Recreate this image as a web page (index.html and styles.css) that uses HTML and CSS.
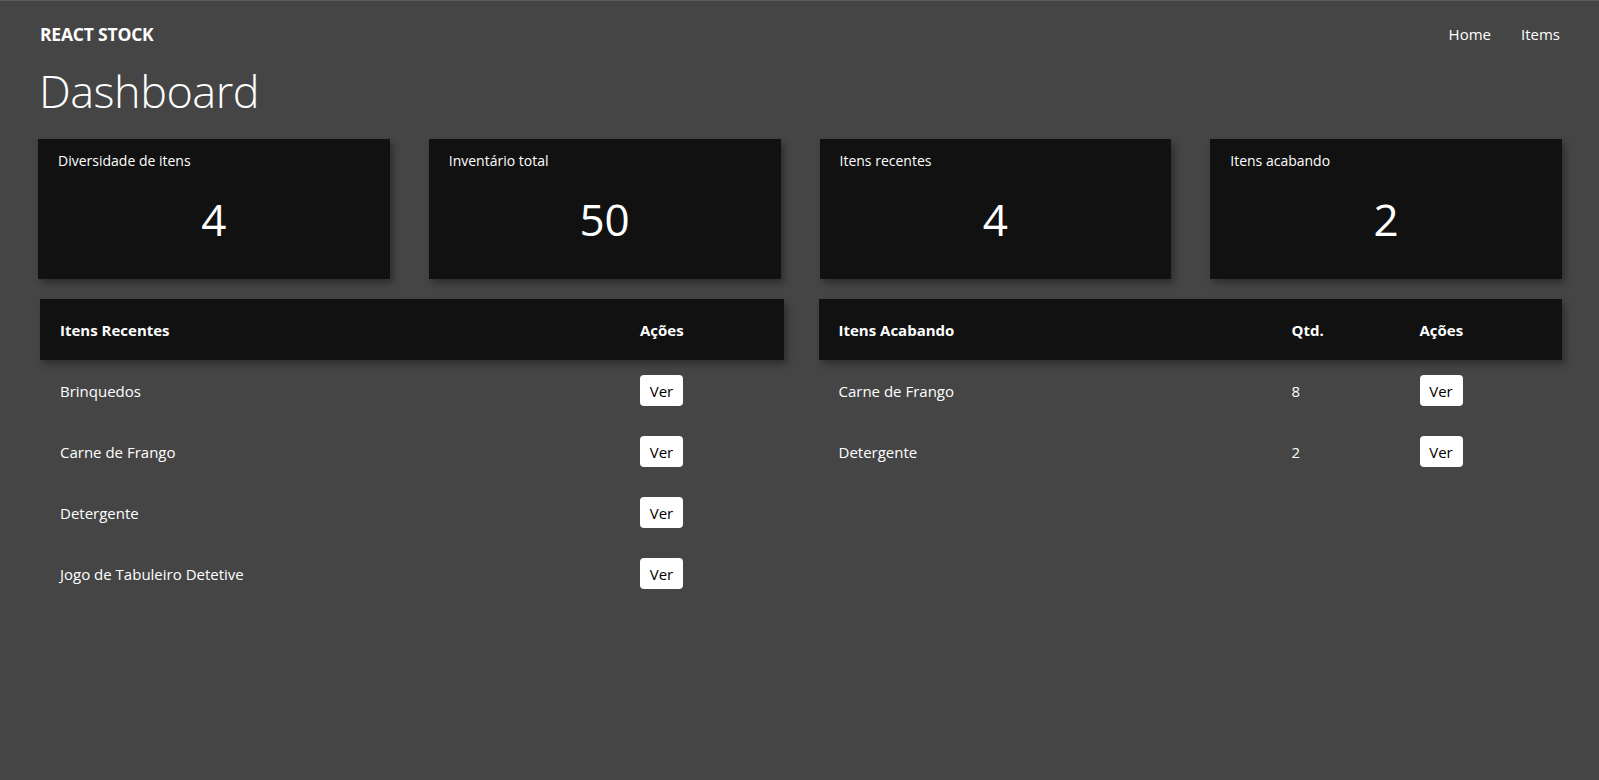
FILE: index.html
```html
<!DOCTYPE html>
<html lang="pt-BR">
<head>
<meta charset="utf-8">
<title>React Stock</title>
<link rel="stylesheet" href="styles.css">
</head>
<body>
<div class="app">
  <header class="navbar">
    <span class="brand">REACT STOCK</span>
    <nav class="nav">
      <a href="#" class="nav-link">Home</a>
      <a href="#" class="nav-link">Items</a>
    </nav>
  </header>
  <h1 class="page-title">Dashboard</h1>

  <section class="stats">
    <div class="stat-card">
      <div class="stat-label">Diversidade de itens</div>
      <div class="stat-value">4</div>
    </div>
    <div class="stat-card">
      <div class="stat-label">Inventário total</div>
      <div class="stat-value">50</div>
    </div>
    <div class="stat-card">
      <div class="stat-label">Itens recentes</div>
      <div class="stat-value">4</div>
    </div>
    <div class="stat-card">
      <div class="stat-label">Itens acabando</div>
      <div class="stat-value">2</div>
    </div>
  </section>

  <section class="tables">
    <div class="table table-recent">
      <div class="thead">
        <div class="cell">Itens Recentes</div>
        <div class="cell">Ações</div>
      </div>
      <div class="row">
        <div class="cell">Brinquedos</div>
        <div class="cell"><button class="btn">Ver</button></div>
      </div>
      <div class="row">
        <div class="cell">Carne de Frango</div>
        <div class="cell"><button class="btn">Ver</button></div>
      </div>
      <div class="row">
        <div class="cell">Detergente</div>
        <div class="cell"><button class="btn">Ver</button></div>
      </div>
      <div class="row">
        <div class="cell">Jogo de Tabuleiro Detetive</div>
        <div class="cell"><button class="btn">Ver</button></div>
      </div>
    </div>

    <div class="table table-low">
      <div class="thead">
        <div class="cell">Itens Acabando</div>
        <div class="cell">Qtd.</div>
        <div class="cell">Ações</div>
      </div>
      <div class="row">
        <div class="cell">Carne de Frango</div>
        <div class="cell">8</div>
        <div class="cell"><button class="btn">Ver</button></div>
      </div>
      <div class="row">
        <div class="cell">Detergente</div>
        <div class="cell">2</div>
        <div class="cell"><button class="btn">Ver</button></div>
      </div>
    </div>
  </section>
</div>
</body>
</html>
```

FILE: styles.css
```css
html, body {
  margin: 0;
  padding: 0;
}

body {
  background: #454545;
  border-top: 1px solid #5c5c5c;
  color: #ffffff;
  font-family: "Segoe UI", "Open Sans", sans-serif;
  min-height: 779px;
}

.app {
  padding: 0 37px 0 38px;
}

.navbar {
  display: flex;
  justify-content: space-between;
  align-items: center;
  height: 65px;
  padding: 0 2px;
}

.brand {
  font-size: 17.5px;
  font-weight: 700;
  letter-spacing: -0.2px;
}

.nav {
  display: flex;
  gap: 30px;
}

.nav-link {
  color: #ffffff;
  text-decoration: none;
  font-size: 15px;
}

.page-title {
  margin: -6px 0 0 0;
  padding-left: 1px;
  font-size: 45px;
  font-weight: 300;
  line-height: 62px;
  letter-spacing: -0.5px;
}

.stats {
  display: grid;
  grid-template-columns: repeat(4, 1fr);
  gap: 39px;
  margin-top: 17px;
}

.stat-card {
  background: #111111;
  height: 140px;
  box-sizing: border-box;
  padding: 12px 20px 0;
  box-shadow: 3px 4px 7px rgba(0, 0, 0, 0.35);
  display: flex;
  flex-direction: column;
}

.stat-label {
  font-size: 14px;
  line-height: 20px;
}

.stat-value {
  flex: 1;
  display: flex;
  align-items: center;
  justify-content: center;
  font-size: 44px;
  padding-bottom: 13px;
}

.tables {
  display: grid;
  grid-template-columns: 1fr 1fr;
  gap: 35px;
  margin-top: 20px;
  padding-left: 2px;
}

.table {
  font-size: 15px;
}

.table-recent .thead,
.table-recent .row {
  display: grid;
  grid-template-columns: 580px 1fr;
}

.table-low .thead,
.table-low .row {
  display: grid;
  grid-template-columns: 453px 128px 1fr;
}

.thead {
  background: #111111;
  height: 61px;
  font-weight: 700;
  box-shadow: 3px 4px 7px rgba(0, 0, 0, 0.35);
}

.row {
  height: 61px;
}

.cell {
  display: flex;
  align-items: center;
  padding-left: 20px;
}

.btn {
  background: #ffffff;
  color: #000000;
  border: none;
  border-radius: 4px;
  width: 43px;
  height: 31px;
  padding: 0;
  font-family: inherit;
  font-size: 15px;
  cursor: pointer;
}
```
